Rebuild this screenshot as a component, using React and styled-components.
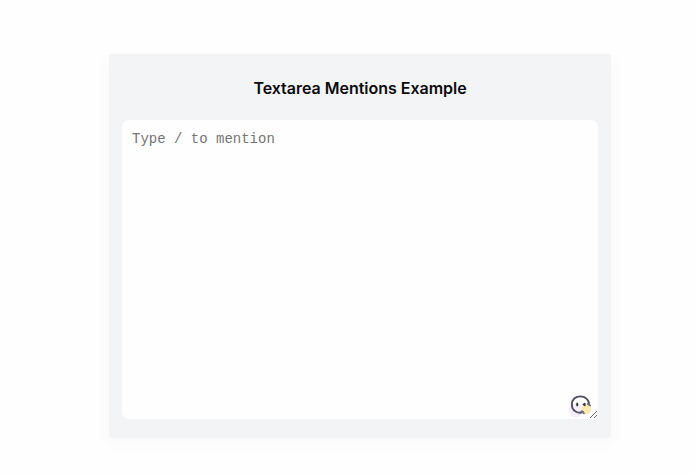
import React from 'react';
import styled, { createGlobalStyle } from 'styled-components';

const GlobalStyle = createGlobalStyle`
  * { box-sizing: border-box; }
  body {
    margin: 0;
    background: #fefefe;
    overflow: hidden;
  }
`;

const Page = styled.main`
  display: flex;
  justify-content: center;
  height: 474px;
  padding: 54px 0 0 25px;
`;

const Card = styled.section`
  display: flex;
  flex-direction: column;
  width: 502px;
  height: 383.5px;
  padding: 24px 13px 18.5px;
  border-radius: 2px;
  background: #f3f4f6;
  box-shadow: 0 4px 20px rgba(0, 0, 0, 0.03);
`;

const Title = styled.h1`
  margin: 0 0 22px;
  font: 600 16px/20px Inter, sans-serif;
  letter-spacing: -0.02px;
  text-align: center;
  white-space: nowrap;
  color: #0b0b0d;
`;

const Field = styled.div`
  position: relative;
  flex: 1;
  display: flex;
`;

const Input = styled.textarea`
  flex: 1;
  padding: 11px 10px 10px;
  border: 0;
  border-radius: 7px;
  outline: 0;
  resize: none;
  background: #fefefe;
  font: 14px/17px 'Courier New', 'Liberation Mono', monospace;
  &::placeholder {
    color: #757575;
    opacity: 1;
  }
`;

const Assistant = styled.svg`
  position: absolute;
  right: 3px;
  bottom: 0;
`;

const Grip = styled.svg`
  position: absolute;
  right: 0;
  bottom: 0;
`;

export default function App() {
  return (
    <>
      <GlobalStyle />
      <Page>
        <Card>
          <Title>Textarea Mentions Example</Title>
          <Field>
            <Input placeholder="Type / to mention" spellCheck={false} />
            <Assistant width="28" height="28" viewBox="0 0 26 26" fill="none">
              <circle cx="8" cy="18" r="6.5" fill="#f6eefb" />
              <circle cx="18" cy="17" r="4.6" fill="#faeab0" />
              <path d="M14.8 19.2C11.5 21.4 4.5 19.4 4.5 12.5C4.5 7.8 8 5 12.3 5C17 5 20.4 8.2 20.4 12" stroke="#50505f" strokeWidth="1.8" strokeLinecap="round" />
              <path d="M13.5 18.8L15.8 20.8M19.2 12L21.5 13.5" stroke="#77737b" strokeWidth="1.7" strokeLinecap="round" />
              <ellipse cx="9.5" cy="12.5" rx="1" ry="1.9" fill="#33333f" />
              <path d="M16.8 11.2L14.6 12.5L16.8 13.9Z" fill="#33333f" stroke="#33333f" strokeWidth=".8" />
            </Assistant>
            <Grip width="9" height="9" viewBox="0 0 9 9">
              <path d="M1 8L8 1M5 8L8 5" stroke="#6a6a6a" strokeWidth="1" />
            </Grip>
          </Field>
        </Card>
      </Page>
    </>
  );
}
